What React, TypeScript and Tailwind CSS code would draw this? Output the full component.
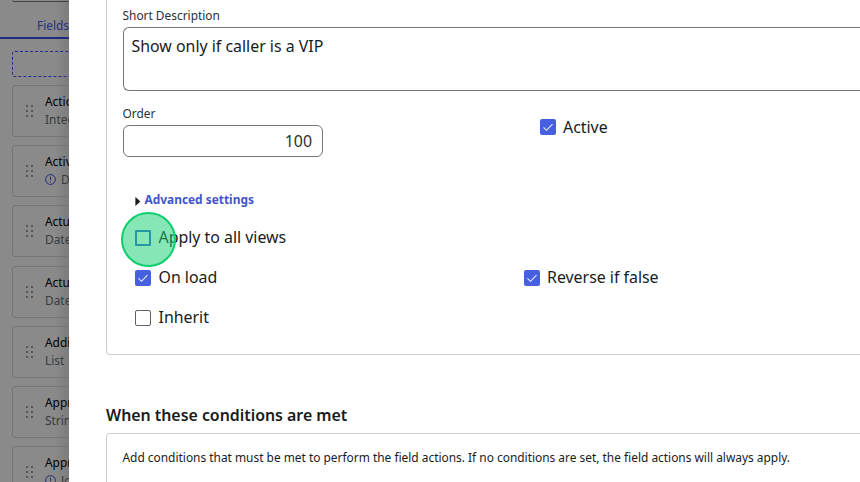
import React from "react";

const fields = [
  { name: "Action status", type: "Integer", info: false },
  { name: "Active", type: "Default", info: true },
  { name: "Actual end", type: "Date/Time", info: false },
  { name: "Actual start", type: "Date/Time", info: false },
  { name: "Additional assignee list", type: "List", info: false },
  { name: "Approval", type: "String", info: false },
  { name: "Approval history", type: "Journal", info: true },
];

function Grip() {
  return (
    <div className="ml-[13px] grid w-[7px] shrink-0 grid-cols-2 gap-x-[2px] gap-y-[3px]">
      {[0, 1, 2, 3, 4, 5].map((i) => (
        <span key={i} className="size-[2px] bg-[#54585a]" />
      ))}
    </div>
  );
}

function InfoIcon() {
  return (
    <svg className="mr-[5px] size-[11px] shrink-0" viewBox="0 0 11 11" fill="none" stroke="#24297c">
      <circle cx="5.5" cy="5.5" r="4.9" />
      <path d="M5.5 2.6v3.6M5.5 7.3v1" />
    </svg>
  );
}

function Sidebar() {
  return (
    <aside className="h-full w-[69px] shrink-0 overflow-hidden bg-linear-to-r from-[#8a8a8a] from-80% to-[#7c7c7c]">
      <div className="flex w-[260px] flex-col">
        <div className="ml-3 h-[2px] rounded-bl-md border-b border-[#3f4446]" />
        <div className="flex h-[35px] items-center pt-[13px] pl-[37px] text-[11.9px] text-[#26307c]">Fields</div>
        <div className="h-[2px] bg-[#1f2a80]" />
        <div className="mt-3 ml-3 h-[26px] rounded-[3px] border border-dashed border-[#262b8a]" />
        <div className="mt-2 ml-3 flex flex-col gap-[8.2px]">
          {fields.map((f) => (
            <div key={f.name} className="flex h-[52px] shrink-0 items-center rounded-[3px] border border-[#747575]">
              <Grip />
              <div className="-mt-[2px] ml-3 whitespace-nowrap text-[11.9px] leading-[18px]">
                <div className="text-black">{f.name}</div>
                <div className="flex items-center text-[#353b3e]">
                  {f.info && <InfoIcon />}
                  {f.type}
                </div>
              </div>
            </div>
          ))}
        </div>
      </div>
    </aside>
  );
}

function Checkbox({ label, checked, focused }: { label: string; checked?: boolean; focused?: boolean }) {
  return (
    <label className="flex h-10 items-center gap-[7.5px] text-[15.9px] leading-6 text-[#181b1d]">
      {checked ? (
        <span className="flex size-4 items-center justify-center rounded-[2px] bg-[#4660e0]">
          <svg className="size-4" viewBox="0 0 16 16" fill="none" stroke="#e8ecff" strokeWidth="1.1">
            <path d="M3.5 8.3l3 3 6-6.2" />
          </svg>
        </span>
      ) : focused ? (
        <span className="size-4 rounded-[1px] border-2 border-[#3a62d8]" />
      ) : (
        <span className="size-4 rounded-[2px] border border-[#5c6265]" />
      )}
      <span className="-mt-px">{label}</span>
    </label>
  );
}

export default function App() {
  return (
    <div className="relative flex h-[482px] w-[860px] overflow-hidden bg-white font-['Noto_Sans',sans-serif]">
      <Sidebar />
      <main className="ml-[37px] w-[754px] shrink-0">
        <section className="h-[355px] rounded-bl-[4px] border-b border-l border-[#cbcdce] pl-4 text-[#2b2f32]">
          <div className="-ml-[0.5px] h-[27px] pt-[6px] text-[11.9px] leading-[18px]">Short Description</div>
          <div className="h-[64px] rounded-l-[6px] border border-r-0 border-[#70777a] px-[7.5px] pt-[6px] text-[15.9px] leading-6 text-[#181b1d]">
            Show only if caller is a VIP
          </div>
          <div className="flex h-[67px]">
            <div className="w-[416.5px]">
              <div className="-ml-[0.5px] h-[34px] pt-[13px] text-[11.9px] leading-[18px]">Order</div>
              <div className="flex h-8 w-[200px] items-center justify-end rounded-[6px] border border-[#70777a] pt-[2px] pr-[10px] text-[15.9px]">
                100
              </div>
            </div>
            <div className="pt-4">
              <Checkbox label="Active" checked />
            </div>
          </div>
          <div className="mt-[33px] ml-3 flex h-[18px] items-center gap-[3.5px] text-[11.9px] font-bold text-[#3f56cd]">
            <svg className="mt-[2px] h-[9px] w-[6px]" viewBox="0 0 6 9">
              <path d="M.4 0L5.4 4.5.4 9z" fill="#181b1d" />
            </svg>
            Advanced settings
          </div>
          <div className="mt-[8.5px] ml-3 grid grid-cols-[388.5px_1fr]">
            <div className="col-span-2">
              <Checkbox label="Apply to all views" focused />
            </div>
            <Checkbox label="On load" checked />
            <Checkbox label="Reverse if false" checked />
            <Checkbox label="Inherit" />
          </div>
        </section>
        <h2 className="mt-12 h-[30px] text-[15.88px] leading-6 font-semibold text-[#181b1d]">When these conditions are met</h2>
        <section className="h-[60px] rounded-tl-[4px] border-t border-l border-[#cbcdce] pt-[14px] pl-[15.5px] text-[11.92px] leading-[18px] text-[#181b1d]">
          Add conditions that must be met to perform the field actions. If no conditions are set, the field actions will always apply.
        </section>
      </main>
      <div className="absolute top-[212px] left-[121px] size-[55px] rounded-full border-2 border-[#0fce6d] bg-[#0fce6d]/50" />
    </div>
  );
}
